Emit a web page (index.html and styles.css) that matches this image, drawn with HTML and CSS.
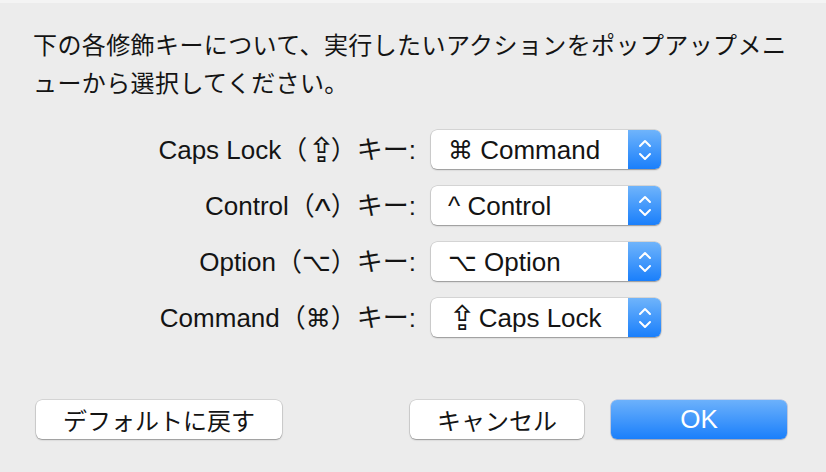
FILE: index.html
```html
<!DOCTYPE html>
<html lang="ja">
<head>
  <meta charset="UTF-8" />
  <title>修飾キー</title>
  <link rel="stylesheet" href="styles.css">
</head>
<body>
  <div class="dialog">
    <p class="message">下の各修飾キーについて、実行したいアクションをポップアップメニ<br>ューから選択してください。</p>

    <div class="keys">
      <label class="key-label">Caps Lock（<span class="sym sym-caps">⇪</span>）キー:</label>
      <div class="popup">
        <span class="popup-text"><span class="sym">⌘</span> Command</span>
        <span class="popup-arrows">
          <svg width="14" height="24" viewBox="0 0 14 24"><path d="M2 8 L7 3 L12 8 M2 16 L7 21 L12 16" fill="none" stroke="#fff" stroke-width="2" stroke-linecap="round" stroke-linejoin="round"/></svg>
        </span>
      </div>

      <label class="key-label">Control（<span class="caret-big">^</span>）キー:</label>
      <div class="popup">
        <span class="popup-text">^ Control</span>
        <span class="popup-arrows">
          <svg width="14" height="24" viewBox="0 0 14 24"><path d="M2 8 L7 3 L12 8 M2 16 L7 21 L12 16" fill="none" stroke="#fff" stroke-width="2" stroke-linecap="round" stroke-linejoin="round"/></svg>
        </span>
      </div>

      <label class="key-label">Option（<span class="sym">⌥</span>）キー:</label>
      <div class="popup">
        <span class="popup-text"><span class="sym">⌥</span> Option</span>
        <span class="popup-arrows">
          <svg width="14" height="24" viewBox="0 0 14 24"><path d="M2 8 L7 3 L12 8 M2 16 L7 21 L12 16" fill="none" stroke="#fff" stroke-width="2" stroke-linecap="round" stroke-linejoin="round"/></svg>
        </span>
      </div>

      <label class="key-label">Command（<span class="sym">⌘</span>）キー:</label>
      <div class="popup">
        <span class="popup-text"><span class="sym sym-caps">⇪</span> Caps Lock</span>
        <span class="popup-arrows">
          <svg width="14" height="24" viewBox="0 0 14 24"><path d="M2 8 L7 3 L12 8 M2 16 L7 21 L12 16" fill="none" stroke="#fff" stroke-width="2" stroke-linecap="round" stroke-linejoin="round"/></svg>
        </span>
      </div>
    </div>

    <div class="buttons">
      <button class="btn btn-default">デフォルトに戻す</button>
      <button class="btn btn-cancel">キャンセル</button>
      <button class="btn btn-ok">OK</button>
    </div>
  </div>
</body>
</html>
```

FILE: styles.css
```css
body {
  margin: 0;
  padding: 0;
  background: #ececec;
  border-top: 3px solid #f4f4f4;
  color: #141414;
  font-family: "Liberation Sans", "Noto Sans CJK JP", "DejaVu Sans", sans-serif;
}
.dialog {
  height: 469px;
  box-sizing: border-box;
  padding: 22px 0 0 0;
}
.message {
  margin: 0 0 0 33px;
  font-family: "Noto Sans CJK JP", sans-serif;
  font-size: 24px;
  line-height: 38px;
  letter-spacing: 0.4px;
  white-space: nowrap;
}
.keys {
  display: grid;
  grid-template-columns: 395px 230px;
  grid-auto-rows: 39px;
  column-gap: 15px;
  row-gap: 17px;
  margin: 29px 0 0 21px;
}
.key-label {
  text-align: right;
  font-size: 26px;
  line-height: 37px;
  padding-top: 2px;
  white-space: nowrap;
}
.sym {
  font-family: "DejaVu Sans", sans-serif;
  font-size: 25px;
  line-height: 0;
}
.sym-caps {
  font-size: 34px;
  letter-spacing: -5px;
  vertical-align: -3px;
}
.caret-big {
  font-size: 34px;
  line-height: 0;
  vertical-align: -7px;
}
.popup {
  display: flex;
  height: 39px;
  background: #fff;
  border-radius: 6px;
  box-shadow: 0 0 0 0.5px rgba(0, 0, 0, 0.18), 0 1px 1.5px rgba(0, 0, 0, 0.3);
  overflow: hidden;
}
.popup-text {
  flex: 1;
  padding: 2px 0 0 17px;
  font-size: 26px;
  line-height: 37px;
  white-space: nowrap;
}
.popup-arrows {
  width: 33px;
  display: flex;
  align-items: center;
  justify-content: center;
  background: linear-gradient(#6fb4fb, #1a7ffb);
}
.buttons {
  display: flex;
  gap: 27px;
  margin: 63px 39px 0 36px;
}
.btn {
  height: 39px;
  padding: 0;
  border: none;
  border-radius: 6px;
  background: #fff;
  color: #141414;
  font-family: "Noto Sans CJK JP", sans-serif;
  font-size: 24px;
  box-shadow: 0 0 0 0.5px rgba(0, 0, 0, 0.18), 0 1px 1.5px rgba(0, 0, 0, 0.3);
}
.btn-default {
  width: 246px;
}
.btn-cancel {
  width: 174px;
  margin-left: auto;
}
.btn-ok {
  width: 176px;
  color: #fff;
  font-family: "Liberation Sans", sans-serif;
  font-size: 26px;
  background: linear-gradient(#6cb1fb, #1a7ffb);
  box-shadow: 0 0 0 0.5px rgba(0, 60, 200, 0.3), 0 1px 1.5px rgba(0, 0, 0, 0.25);
}
```
